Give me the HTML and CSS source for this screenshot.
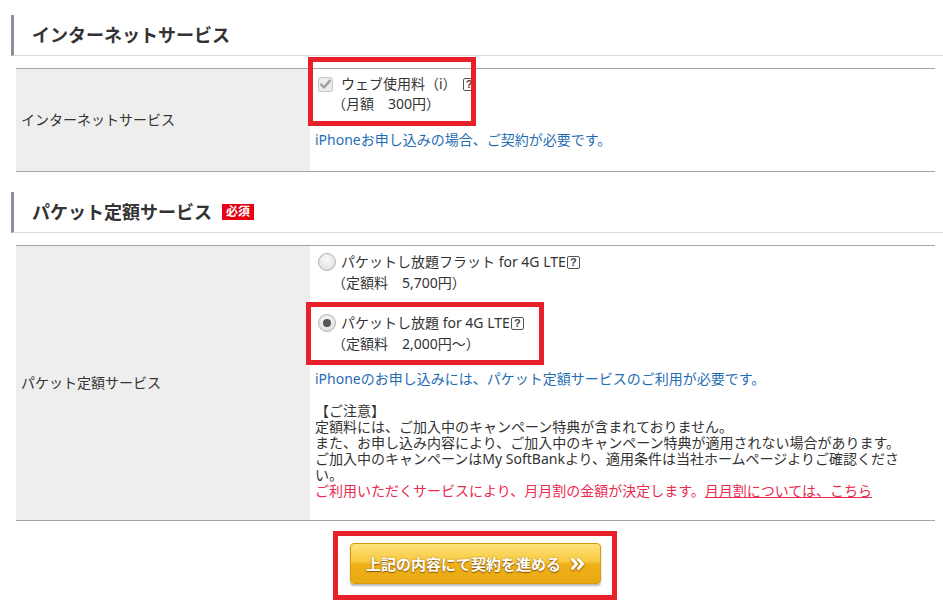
FILE: index.html
```html
<!DOCTYPE html>
<html lang="ja">
<head>
<meta charset="utf-8">
<title>サービス選択</title>
<link rel="stylesheet" href="styles.css">
</head>
<body>
<div class="page">
  <h2 class="sec-head">インターネットサービス</h2>
  <div class="form-table">
    <div class="label-cell">インターネットサービス</div>
    <div class="value-cell">
      <div class="opt">
        <div class="opt-line">
          <svg class="chk" width="15" height="15" viewBox="0 0 15 15"><rect x="0.5" y="0.5" width="14" height="14" rx="2" fill="#ececec" stroke="#c6c6c6"/><path d="M3.2 7.6 L6 10.4 L11.8 3.8" fill="none" stroke="#a3a3a3" stroke-width="2.6" stroke-linecap="round" stroke-linejoin="round"/></svg>
          <span>ウェブ使用料（i）</span><span class="help">?</span>
        </div>
        <div class="opt-sub">（月額　300円）</div>
      </div>
      <p class="info first-info">iPhoneお申し込みの場合、ご契約が必要です。</p>
    </div>
  </div>

  <h2 class="sec-head">パケット定額サービス<span class="badge">必須</span></h2>
  <div class="form-table">
    <div class="label-cell">パケット定額サービス</div>
    <div class="value-cell">
      <div class="radio-opt">
        <div class="opt-line"><span class="radio"></span><span>パケットし放題フラット for 4G LTE</span><span class="help tight">?</span></div>
        <div class="opt-sub">（定額料　5,700円）</div>
      </div>
      <div class="radio-opt second">
        <div class="opt-line"><span class="radio on"></span><span>パケットし放題 for 4G LTE</span><span class="help tight">?</span></div>
        <div class="opt-sub">（定額料　2,000円～）</div>
      </div>
      <div class="notes">
        <p class="info">iPhoneのお申し込みには、パケット定額サービスのご利用が必要です。</p>
        <p class="caution">【ご注意】<br>定額料には、ご加入中のキャンペーン特典が含まれておりません。<br>また、お申し込み内容により、ご加入中のキャンペーン特典が適用されない場合があります。<br>ご加入中のキャンペーンはMy SoftBankより、適用条件は当社ホームページよりご確認くださ<br>い。<br><span class="warn">ご利用いただくサービスにより、月月割の金額が決定します。<a href="#" class="warn-link">月月割については、こちら</a></span></p>
      </div>
    </div>
  </div>

  <div class="actions">
    <a href="#" class="btn-next">上記の内容にて契約を進める<svg class="chev" width="14" height="12" viewBox="0 0 14 12"><path d="M1.5 1.5 L5.5 6 L1.5 10.5 M7.5 1.5 L11.5 6 L7.5 10.5" fill="none" stroke="#fff" stroke-width="2.8" stroke-linecap="round" stroke-linejoin="round"/></svg></a>
  </div>

  <div class="mark mark-1"></div>
  <div class="mark mark-2"></div>
  <div class="mark mark-3"></div>
</div>
</body>
</html>
```
FILE: styles.css
```css
* { box-sizing: border-box; }
html, body { margin: 0; padding: 0; background: #fff; }
body {
  font-family: "Noto Sans", "Noto Sans CJK JP", sans-serif;
  font-size: 14px;
  color: #333;
}
.page {
  position: relative;
  width: 943px;
  height: 609px;
  padding-top: 15px;
  overflow: hidden;
}
.sec-head {
  margin: 0 0 0 11px;
  height: 41px;
  border-left: 3px solid #8a919b;
  border-bottom: 1px solid #dadada;
  padding-left: 18px;
  display: flex;
  align-items: center;
  font-size: 18px;
  font-weight: bold;
  color: #333;
  line-height: 1;
}
.sec-head + .form-table { margin-top: 12px; }
.form-table + .sec-head { margin-top: 20px; }
.badge {
  display: inline-flex;
  align-items: center;
  justify-content: center;
  margin-left: 10px;
  width: 32px;
  height: 16px;
  background: #e50012;
  color: #fff;
  font-size: 12px;
  font-weight: bold;
  line-height: 1;
}
.form-table {
  margin-left: 16px;
  width: 919px;
  display: grid;
  grid-template-columns: 294px 1fr;
  border-top: 1px solid #a5a5a5;
  border-bottom: 1px solid #a5a5a5;
}
.label-cell {
  background: #eeeeee;
  display: flex;
  align-items: center;
  padding: 0 0 3px 5px;
  color: #333;
}
.value-cell {
  padding: 5px 0 21px 5px;
}
.opt-line {
  display: flex;
  align-items: center;
  line-height: 20px;
  height: 20px;
}
.chk { margin: 0 8px 0 3px; flex: none; }
.opt-sub { line-height: 20px; padding-left: 17px; }
.help {
  display: inline-block;
  width: 13px;
  height: 13px;
  border: 1px solid #555;
  border-radius: 2px;
  background: #fff;
  font-family: "Liberation Sans", "DejaVu Sans", sans-serif;
  font-size: 11px;
  font-weight: bold;
  line-height: 11px;
  text-align: center;
  color: #444;
  margin-left: 6px;
  margin-top: 1px;
  flex: none;
}
.help.tight { margin-left: 1px; }
.info { margin: 0; color: #1f6db3; line-height: 20px; }
.first-info { margin-top: 16px; }
.radio-opt .opt-line { height: 21px; line-height: 21px; }
.radio-opt .opt-sub { line-height: 21px; }
.radio-opt.second { margin-top: 19px; }
.radio {
  flex: none;
  width: 18px;
  height: 18px;
  margin: 0 5px 0 3px;
  border-radius: 50%;
  border: 1px solid #b3b3b3;
  background: radial-gradient(circle at 50% 35%, #fafafa 0%, #e6e6e6 60%, #d4d4d4 100%);
  position: relative;
}
.radio.on::after {
  content: "";
  position: absolute;
  left: 4px;
  top: 4px;
  width: 8px;
  height: 8px;
  border-radius: 50%;
  background: #555;
}
.notes { margin-top: 17px; line-height: 16px; }
.notes .info { line-height: 16px; }
.caution { margin: 16px 0 0; line-height: 16px; color: #333; }
.warn { color: #ea2a4f; }
.warn-link { color: #ea2a4f; text-decoration: underline; }
.actions {
  width: 919px;
  margin-left: 16px;
  display: flex;
  justify-content: center;
  padding-top: 22px;
}
.btn-next {
  display: flex;
  align-items: center;
  justify-content: center;
  gap: 10px;
  width: 251px;
  height: 41px;
  border: 1px solid #d9990a;
  border-radius: 4px;
  background: linear-gradient(to bottom, #fde27a 0%, #f8c93e 45%, #efb019 52%, #e9a911 100%);
  box-shadow: 0 2px 2px rgba(0, 0, 0, 0.28);
  color: #fff;
  font-family: "Noto Sans CJK JP", sans-serif;
  font-size: 15px;
  font-weight: bold;
  text-decoration: none;
  text-shadow: 0 1px 1px rgba(120, 70, 0, 0.8), 0 0 2px rgba(120, 70, 0, 0.5);
}
.chev { filter: drop-shadow(0 1px 1px rgba(120, 70, 0, 0.8)); }
.mark {
  position: absolute;
  border: 5px solid #e8202a;
  pointer-events: none;
}
.mark-1 { left: 308px; top: 57px; width: 168px; height: 69px; }
.mark-2 { left: 306px; top: 302px; width: 238px; height: 63px; }
.mark-3 { left: 333px; top: 531px; width: 284px; height: 69px; }
```
